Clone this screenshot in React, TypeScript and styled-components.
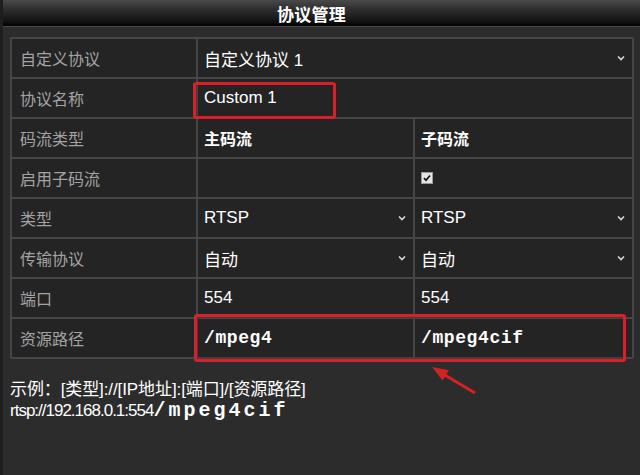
import React from "react";
import styled, { createGlobalStyle } from "styled-components";

const GlobalStyle = createGlobalStyle`
  html, body {
    margin: 0;
    padding: 0;
    background: #2c2c2c;
  }
  body {
    font-family: "Liberation Sans", "Noto Sans CJK SC", sans-serif;
  }
`;

const Page = styled.div`
  width: 640px;
  height: 475px;
  overflow: hidden;
  display: flex;
  flex-direction: column;
  background: #2c2c2c;
  box-sizing: border-box;
  border-left: 3px solid #1e1e1e;
`;

const TitleBar = styled.div`
  height: 26px;
  flex: none;
  display: flex;
  align-items: center;
  justify-content: center;
  padding-right: 20px;
  background: linear-gradient(#4a4a4a 0%, #2e2e2e 35%, #141414 80%, #000 100%);
  border-bottom: 1px solid #4a4a4a;
  color: #ffffff;
  font-family: "Noto Sans CJK SC", sans-serif;
  font-weight: 700;
  font-size: 17px;
  letter-spacing: 0.3px;
`;

const Content = styled.div`
  padding: 10px 6px 0 7px;
  display: flex;
  flex-direction: column;
`;

const Table = styled.div`
  position: relative;
  display: grid;
  grid-template-columns: 184px 215px 217px;
  grid-auto-rows: 38px;
  gap: 2px;
  padding: 2px;
  background: #464646;
  border-radius: 2px;
`;

const Cell = styled.div<{ $span?: number; $label?: boolean; $select?: boolean }>`
  grid-column: span ${(p) => p.$span ?? 1};
  position: relative;
  display: flex;
  align-items: center;
  justify-content: ${(p) => (p.$select ? "space-between" : "flex-start")};
  padding: ${(p) => (p.$label ? "0 0 0 8px" : "0 7px 0 6px")};
  background: #252424;
  color: ${(p) => (p.$label ? "#a3a3a3" : "#ffffff")};
  font-family: "Liberation Sans", "Noto Sans CJK SC", sans-serif;
  font-size: ${(p) => (p.$label ? "16px" : "17px")};
`;

const Bold = styled.span`
  font-family: "Noto Sans CJK SC", serif;
  font-weight: 700;
  font-size: 16px;
`;

const Path = styled.span`
  font-family: "Liberation Mono", monospace;
  font-weight: 700;
  font-size: 18px;
  letter-spacing: 0.6px;
`;

const Check = styled.span`
  width: 12px;
  height: 12px;
  background: #e4e4e4;
  border: 1px solid #9a9a9a;
  display: flex;
  align-items: center;
  justify-content: center;
  box-sizing: border-box;
`;

const Highlight = styled.div`
  position: absolute;
  border: 3px solid #d3222c;
  border-radius: 3px;
  box-shadow: inset 0 0 2px rgba(120, 0, 0, 0.8);
  pointer-events: none;
`;

const NameBox = styled(Highlight)`
  left: -5px;
  top: 3px;
  width: 137px;
  height: 31px;
`;

const PathBox = styled(Highlight)`
  left: 184px;
  top: 277px;
  width: 426px;
  height: 42px;
`;

const Arrow = styled.svg`
  position: absolute;
  left: 415px;
  top: 327px;
  overflow: visible;
`;

const Example = styled.div`
  margin-top: 20px;
  color: #ffffff;
  line-height: 21px;
`;

const ExampleLine = styled.div<{ $size: number; $spacing: number }>`
  white-space: nowrap;
  font-size: ${(p) => p.$size}px;
  letter-spacing: ${(p) => p.$spacing}px;
`;

const BigPath = styled.span`
  font-family: "Liberation Mono", monospace;
  font-weight: 700;
  font-size: 20px;
  letter-spacing: 3px;
`;

const Chevron = () => (
  <svg width="8" height="6" viewBox="0 0 8 6">
    <path d="M1 1.5 L4 4.5 L7 1.5" stroke="#d8d8d8" strokeWidth="1.6" fill="none" />
  </svg>
);

const CheckMark = () => (
  <svg width="8" height="8" viewBox="0 0 8 8">
    <path d="M1 4.2 L3 6.3 L7 1.5" stroke="#111" strokeWidth="1.7" fill="none" />
  </svg>
);

export default function App() {
  return (
    <>
      <GlobalStyle />
      <Page>
        <TitleBar>协议管理</TitleBar>
        <Content>
          <Table>
            <Cell $label>自定义协议</Cell>
            <Cell $span={2} $select>
              <span>自定义协议 1</span>
              <Chevron />
            </Cell>

            <Cell $label>协议名称</Cell>
            <Cell $span={2}>
              Custom 1
              <NameBox />
            </Cell>

            <Cell $label>码流类型</Cell>
            <Cell>
              <Bold>主码流</Bold>
            </Cell>
            <Cell>
              <Bold>子码流</Bold>
            </Cell>

            <Cell $label>启用子码流</Cell>
            <Cell />
            <Cell>
              <Check>
                <CheckMark />
              </Check>
            </Cell>

            <Cell $label>类型</Cell>
            <Cell $select>
              <span>RTSP</span>
              <Chevron />
            </Cell>
            <Cell $select>
              <span>RTSP</span>
              <Chevron />
            </Cell>

            <Cell $label>传输协议</Cell>
            <Cell $select>
              <span>自动</span>
              <Chevron />
            </Cell>
            <Cell $select>
              <span>自动</span>
              <Chevron />
            </Cell>

            <Cell $label>端口</Cell>
            <Cell>554</Cell>
            <Cell>554</Cell>

            <Cell $label>资源路径</Cell>
            <Cell>
              <Path>/mpeg4</Path>
            </Cell>
            <Cell>
              <Path>/mpeg4cif</Path>
            </Cell>

            <PathBox />
            <Arrow width="50" height="30" viewBox="0 0 50 30">
              <path d="M50 29 L19 10.5" stroke="#d42222" strokeWidth="3" fill="none" />
              <polygon points="7,3 17.6,16.4 23.8,6.2" fill="#d42222" />
            </Arrow>
          </Table>
          <Example>
            <ExampleLine $size={17} $spacing={-0.1}>
              示例：[类型]://[IP地址]:[端口]/[资源路径]
            </ExampleLine>
            <ExampleLine $size={17} $spacing={-1}>
              rtsp://192.168.0.1:554<BigPath>/mpeg4cif</BigPath>
            </ExampleLine>
          </Example>
        </Content>
      </Page>
    </>
  );
}
